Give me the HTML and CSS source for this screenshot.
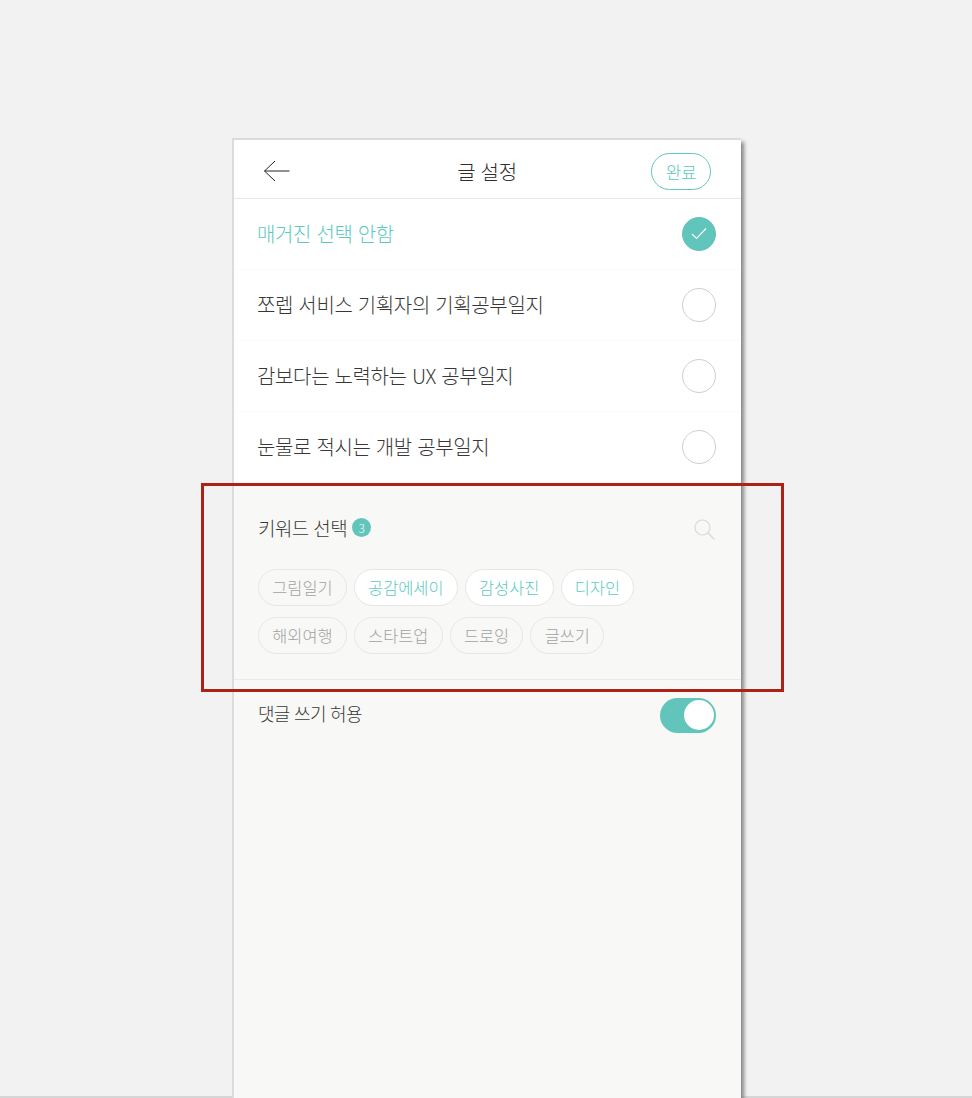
FILE: index.html
```html
<!DOCTYPE html>
<html lang="ko">
<head>
<meta charset="utf-8">
<title>글 설정</title>
<link rel="stylesheet" href="styles.css">
</head>
<body>
<main class="phone">
  <header class="topbar">
    <svg class="back" width="28" height="22" viewBox="0 0 28 22" aria-hidden="true"><path d="M12 1 1.5 11 12 21M1.5 11H26.5" fill="none" stroke="#222" stroke-width="1"/></svg>
    <h1 class="title">글 설정</h1>
    <button class="done">완료</button>
  </header>
  <ul class="mags">
    <li class="mag mag-on"><span>매거진 선택 안함</span>
      <span class="radio radio-on"><svg width="16" height="13" viewBox="0 0 16 13" aria-hidden="true"><path d="M1 7l4.5 4.5L15 1.5" fill="none" stroke="#fff" stroke-width="1.1"/></svg></span></li>
    <li class="mag"><span>쪼렙 서비스 기획자의 기획공부일지</span><span class="radio"></span></li>
    <li class="mag"><span>감보다는 노력하는 UX 공부일지</span><span class="radio"></span></li>
    <li class="mag"><span>눈물로 적시는 개발 공부일지</span><span class="radio"></span></li>
  </ul>
  <section class="keywords">
    <div class="kw-head">
      <div class="kw-title"><span>키워드 선택</span><span class="count">3</span></div>
      <svg class="search" width="21" height="21" viewBox="0 0 21 21" aria-hidden="true"><circle cx="8.5" cy="8.5" r="7.5" fill="none" stroke="#d9d9d7" stroke-width="1.2"/><path d="M14 14l6.5 6.5" stroke="#d9d9d7" stroke-width="1.2"/></svg>
    </div>
    <div class="chips">
      <span class="chip">그림일기</span>
      <span class="chip chip-on">공감에세이</span>
      <span class="chip chip-on">감성사진</span>
      <span class="chip chip-on">디자인</span>
    </div>
    <div class="chips">
      <span class="chip">해외여행</span>
      <span class="chip">스타트업</span>
      <span class="chip">드로잉</span>
      <span class="chip">글쓰기</span>
    </div>
  </section>
  <section class="comments">
    <span class="comments-label">댓글 쓰기 허용</span>
    <span class="toggle"><span class="knob"></span></span>
  </section>
</main>
<div class="highlight"></div>
</body>
</html>
```

FILE: styles.css
```css
* { box-sizing: border-box; }
html, body { margin: 0; height: 1098px; overflow: hidden; }
body {
  position: relative;
  padding: 138px 0 0 232px;
  background: linear-gradient(#d6d6d6, #d6d6d6) left bottom / 100% 2px no-repeat, #f2f2f2;
  font-family: "Noto Sans CJK KR", "Noto Sans", sans-serif;
  font-weight: 300;
  color: #333;
}
.phone {
  width: 509px;
  height: 1000px;
  display: flex;
  flex-direction: column;
  background: #f8f8f6;
  border-top: 2px solid #dcdcdc;
  border-left: 2px solid #dcdcdc;
  box-shadow: 4px 3px 4px -1px #858585;
}
.topbar {
  height: 59px;
  flex: none;
  display: grid;
  grid-template-columns: 1fr auto 1fr;
  align-items: center;
  padding: 4px 30px 0 29px;
  background: #fff;
  border-bottom: 1px solid #e6e6e6;
}
.back { margin-top: -1px; }
.title {
  margin: 0;
  text-align: center;
  font-size: 20px;
  font-weight: 300;
  letter-spacing: -0.3px;
  color: #2e2e2e;
}
.done {
  justify-self: end;
  width: 60px;
  height: 37px;
  padding: 0;
  border: 1px solid #62c6bd;
  border-radius: 19px;
  background: #fff;
  color: #5ac8be;
  font: 300 17px "Noto Sans CJK KR", sans-serif;
  letter-spacing: -0.4px;
}
.mags { margin: 0; padding: 0; list-style: none; background: #fff; }
.mag {
  height: 71px;
  display: flex;
  align-items: center;
  justify-content: space-between;
  padding: 0 25px 1px 23px;
  font-size: 20px;
  letter-spacing: -0.35px;
  color: #383838;
  border-bottom: 1px solid #fbfbfb;
}
.mag-on { color: #5ccabf; }
.radio {
  width: 34px;
  height: 34px;
  border: 1px solid #cfcfcf;
  border-radius: 50%;
  background: #fff;
  display: flex;
  align-items: center;
  justify-content: center;
}
.radio-on { background: #61c5bc; border-color: #61c5bc; }
.keywords {
  height: 197px;
  flex: none;
  padding: 0 25px 0 24px;
  border-bottom: 1px solid #ebebe9;
}
.kw-head {
  height: 86px;
  padding: 3px 1px 0 0;
  display: flex;
  align-items: center;
  justify-content: space-between;
}
.kw-title { display: flex; align-items: center; gap: 5px; font-size: 19px; letter-spacing: -0.6px; color: #383838; }
.search { margin-top: 4px; }
.count {
  width: 19px;
  height: 19px;
  border-radius: 50%;
  background: #61c5bc;
  color: #fff;
  font-size: 12px;
  letter-spacing: 0;
  display: flex;
  align-items: center;
  justify-content: center;
}
.chips { display: flex; gap: 7px; margin-bottom: 11px; }
.chip {
  height: 37px;
  padding: 0 13.25px 2px;
  display: flex;
  align-items: center;
  border: 1px solid #e6e6e4;
  border-radius: 19px;
  font-size: 16.4px;
  color: #a2a2a2;
}
.chip-on { background: #fff; color: #5ccabf; }
.comments {
  height: 70px;
  flex: none;
  display: flex;
  align-items: center;
  justify-content: space-between;
  padding: 0 25px 0 24px;
  font-size: 18px;
  letter-spacing: -0.7px;
  color: #383838;
}
.comments-label { margin-bottom: 4px; }
.toggle {
  width: 56px;
  height: 35px;
  padding: 2px 2px 2px 24px;
  border-radius: 18px;
  background: #61c5bc;
}
.knob { display: block; width: 30px; height: 30px; border-radius: 50%; background: #fff; }
.highlight {
  position: absolute;
  left: 201px;
  top: 483px;
  width: 583px;
  height: 209px;
  border: 3px solid #ab2217;
}
```
